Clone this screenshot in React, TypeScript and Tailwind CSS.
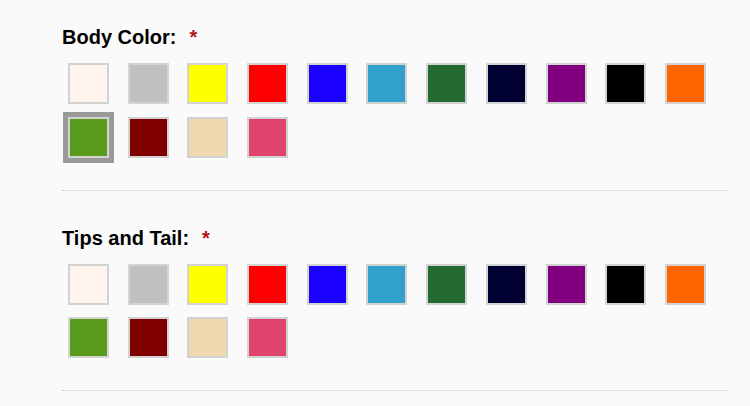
import React from 'react';

const colors = [
  '#fff4ee',
  '#c0c0c0',
  '#ffff00',
  '#ff0000',
  '#1900ff',
  '#31a1cb',
  '#246b32',
  '#000033',
  '#800080',
  '#000000',
  '#ff6600',
  '#5a9a1a',
  '#800000',
  '#f0d9ae',
  '#df436b',
];

const Section = ({ title, selected }: { title: string; selected?: number }) => (
  <div>
    <h2 className="text-[20px] leading-[20px] font-bold text-black">
      {title}
      <span className="ml-[13px] text-[#b5121b]">*</span>
    </h2>
    <div className="mt-4 ml-[6px] flex flex-wrap">
      {colors.map((c, i) => (
        <div
          key={c}
          className={
            'w-[41px] h-[41px] mr-[18.7px] mb-[12.4px] border-2 border-[#d3d3d3]' +
            (i === selected ? ' outline-5 outline-solid outline-[#9a9a9a]' : '')
          }
          style={{ backgroundColor: c }}
        />
      ))}
    </div>
    <div className="mt-[19.6px] border-t border-dotted border-[#c4c4c4]" />
  </div>
);

export default function App() {
  return (
    <div className="min-h-[406px] bg-[#fafafa] pl-[62px] pr-[22px] pt-[27.4px] font-['Liberation_Sans',Arial,sans-serif]">
      <div className="flex flex-col gap-[37px]">
        <Section title="Body Color:" selected={11} />
        <Section title="Tips and Tail:" />
      </div>
    </div>
  );
}
